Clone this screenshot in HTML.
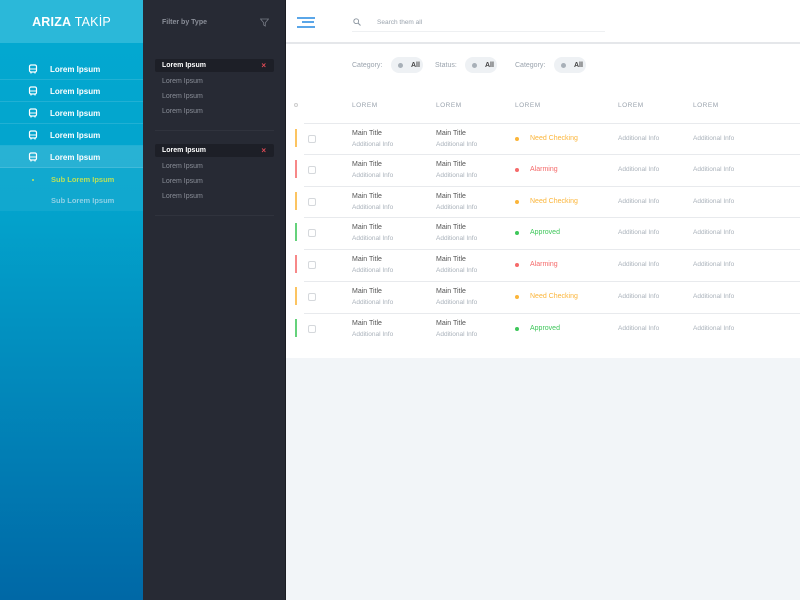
<!DOCTYPE html>
<html><head><style>
*{margin:0;padding:0;box-sizing:border-box}
body{width:800px;height:600px;overflow:hidden;font-family:"Liberation Sans",sans-serif;position:relative;background:#f2f5f8}
.a{position:absolute}
#side{left:0;top:0;width:143px;height:600px;background:linear-gradient(#03a9d1 0px,#03a3cc 210px,#0068a6 600px)}
#logo{left:0;top:0;width:143px;height:43px;background:#2bb8d9;color:#fff;font-size:12.5px;text-align:center;line-height:44px;letter-spacing:.2px}
.nav{left:0;width:143px;height:22px;border-bottom:1px solid rgba(255,255,255,.12);color:#fff;font-size:8px;font-weight:bold;line-height:23px;padding-left:50px}
.nav svg{position:absolute;left:28px;top:6px}
#dark{left:143px;top:0;width:143px;height:600px;background:#272a34;border-right:1px solid #1b1d23}
.fl{color:#8a8e98;font-size:7px;left:162px}
.sel{left:155px;width:119px;height:13px;background:#1d1f27;border-radius:2px;color:#fff;font-size:7px;font-weight:bold;line-height:13px;padding-left:7px}
.sel b{position:absolute;right:8px;color:#e04a55;font-size:8px}
#main{left:286px;top:0;width:514px;height:358px;background:#fff}
#hdr{left:286px;top:0;width:514px;height:44px;background:#fff;border-bottom:2px solid #e5e7ea}
.t{font-size:7px;color:#9aa3ad}
.pill{height:16px;border-radius:8px;background:#eef1f4;color:#444;width:32px}
.pill span{position:absolute;left:20px;top:5px;font-size:7px;font-weight:bold;line-height:8px}
.pill:before{content:"";position:absolute;left:7px;top:6px;width:5px;height:5px;border-radius:50%;background:#a8b0b8}
.row{left:304px;width:496px;height:32px;border-top:1px solid #e8eaed}
.bar{left:295px;width:2px;height:18px}
.cb{left:308px;width:8px;height:8px;border:1px solid #d5d8dc;border-radius:2px}
.mt{font-size:7px;color:#555}
.ai{font-size:6.5px;color:#aab2bb}
.st{font-size:7px}
.dot{width:4px;height:4px;border-radius:50%}
</style></head><body>
<div id="side" class="a"></div>
<div id="logo" class="a"><b>ARIZA</b> TAKİP</div>
<div id="navs"></div>
<div class="a" style="left:0;top:168px;width:143px;height:43px;background:rgba(255,255,255,.06)"></div>
<div class="a" style="left:32px;top:179px;width:2px;height:2px;background:#c8e85a;border-radius:50%"></div>
<div class="a" style="left:51px;top:175px;font-size:7.5px;font-weight:bold;color:#b8e05a">Sub Lorem Ipsum</div>
<div class="a" style="left:51px;top:196px;font-size:7.5px;font-weight:bold;color:#8fd0e6">Sub Lorem Ipsum</div>

<div id="dark" class="a"></div>
<div class="a fl" style="top:19px;font-weight:bold">Filter by Type</div>
<svg class="a" style="left:260px;top:18px" width="9" height="9" viewBox="0 0 9 9"><path d="M0.5 1H8.5L5.3 4.8V8L3.7 7V4.8Z" fill="none" stroke="#777b85" stroke-width=".8"/></svg>
<div class="a sel" style="top:59px">Lorem Ipsum<b>×</b></div>
<div class="a fl" style="top:78px">Lorem Ipsum</div>
<div class="a fl" style="top:93px">Lorem Ipsum</div>
<div class="a fl" style="top:108px">Lorem Ipsum</div>
<div class="a" style="left:155px;top:130px;width:119px;height:1px;background:#30333d"></div>
<div class="a sel" style="top:144px">Lorem Ipsum<b>×</b></div>
<div class="a fl" style="top:163px">Lorem Ipsum</div>
<div class="a fl" style="top:178px">Lorem Ipsum</div>
<div class="a fl" style="top:193px">Lorem Ipsum</div>
<div class="a" style="left:155px;top:215px;width:119px;height:1px;background:#30333d"></div>

<div id="main" class="a"></div>
<div id="hdr" class="a"></div>
<div class="a" style="left:297px;top:17px;width:18px;height:1.5px;background:#5aa6e8"></div>
<div class="a" style="left:302px;top:21px;width:12px;height:1.5px;background:#5aa6e8"></div>
<div class="a" style="left:297px;top:26px;width:18px;height:1.5px;background:#5aa6e8"></div>
<svg class="a" style="left:353px;top:18px" width="8" height="8" viewBox="0 0 8 8"><circle cx="3.2" cy="3.2" r="2.4" fill="none" stroke="#8a949e" stroke-width=".9"/><line x1="5" y1="5" x2="7.5" y2="7.5" stroke="#8a949e" stroke-width="1"/></svg>
<div class="a t" style="left:377px;top:19px;font-size:6.5px">Search them all</div>
<div class="a" style="left:352px;top:31px;width:253px;height:1px;background:#eef0f2"></div>

<div class="a t" style="left:352px;top:62px">Category:</div>
<div class="a pill" style="left:391px;top:57px"><span>All</span></div>
<div class="a t" style="left:435px;top:62px">Status:</div>
<div class="a pill" style="left:465px;top:57px"><span>All</span></div>
<div class="a t" style="left:515px;top:62px">Category:</div>
<div class="a pill" style="left:554px;top:57px"><span>All</span></div>

<div class="a" style="left:294px;top:103px;width:4px;height:4px;border:1px solid #ccc;border-radius:50%"></div>
<div class="a t" style="left:352px;top:102px;font-size:6.5px;letter-spacing:.5px">LOREM</div>
<div class="a t" style="left:436px;top:102px;font-size:6.5px;letter-spacing:.5px">LOREM</div>
<div class="a t" style="left:515px;top:102px;font-size:6.5px;letter-spacing:.5px">LOREM</div>
<div class="a t" style="left:618px;top:102px;font-size:6.5px;letter-spacing:.5px">LOREM</div>
<div class="a t" style="left:693px;top:102px;font-size:6.5px;letter-spacing:.5px">LOREM</div>

<div id="rows"></div>
<script>
var ic='<svg width="10" height="10" viewBox="0 0 10 10"><rect x="1.5" y="1" width="7" height="7" rx="1.5" fill="none" stroke="#fff" stroke-width="1.2"/><line x1="1.5" y1="5" x2="8.5" y2="5" stroke="#fff"/><line x1="3" y1="8" x2="3" y2="9.5" stroke="#fff" stroke-width="1.2"/><line x1="7" y1="8" x2="7" y2="9.5" stroke="#fff" stroke-width="1.2"/></svg>';
var n="";[58,80,102,124,146].forEach(function(t,i){n+='<div class="a nav" style="top:'+t+'px'+(i==4?';background:rgba(255,255,255,.15)':'')+'">'+ic+'Lorem Ipsum</div>';});
document.getElementById("navs").innerHTML=n;
var tops=[123,154,186,217,249,281,313];
var st=[["Need Checking","#fbb53a"],["Alarming","#f56a6a"],["Need Checking","#fbb53a"],["Approved","#3ec75a"],["Alarming","#f56a6a"],["Need Checking","#fbb53a"],["Approved","#3ec75a"]];
var h="";
tops.forEach(function(t,i){var c=st[i][1];
h+='<div class="a row" style="top:'+t+'px"></div>';
h+='<div class="a bar" style="top:'+(t+6)+'px;background:'+c+';opacity:.8"></div>';
h+='<div class="a cb" style="top:'+(t+12)+'px"></div>';
h+='<div class="a mt" style="left:352px;top:'+(t+7)+'px">Main Title</div><div class="a ai" style="left:352px;top:'+(t+18)+'px">Additional Info</div>';
h+='<div class="a mt" style="left:436px;top:'+(t+7)+'px">Main Title</div><div class="a ai" style="left:436px;top:'+(t+18)+'px">Additional Info</div>';
h+='<div class="a dot" style="left:515px;top:'+(t+14)+'px;background:'+c+'"></div><div class="a st" style="left:530px;top:'+(t+12)+'px;color:'+c+'">'+st[i][0]+'</div>';
h+='<div class="a ai" style="left:618px;top:'+(t+12)+'px">Additional Info</div><div class="a ai" style="left:693px;top:'+(t+12)+'px">Additional Info</div>';
});
document.getElementById("rows").innerHTML=h;
</script>
</body></html>
